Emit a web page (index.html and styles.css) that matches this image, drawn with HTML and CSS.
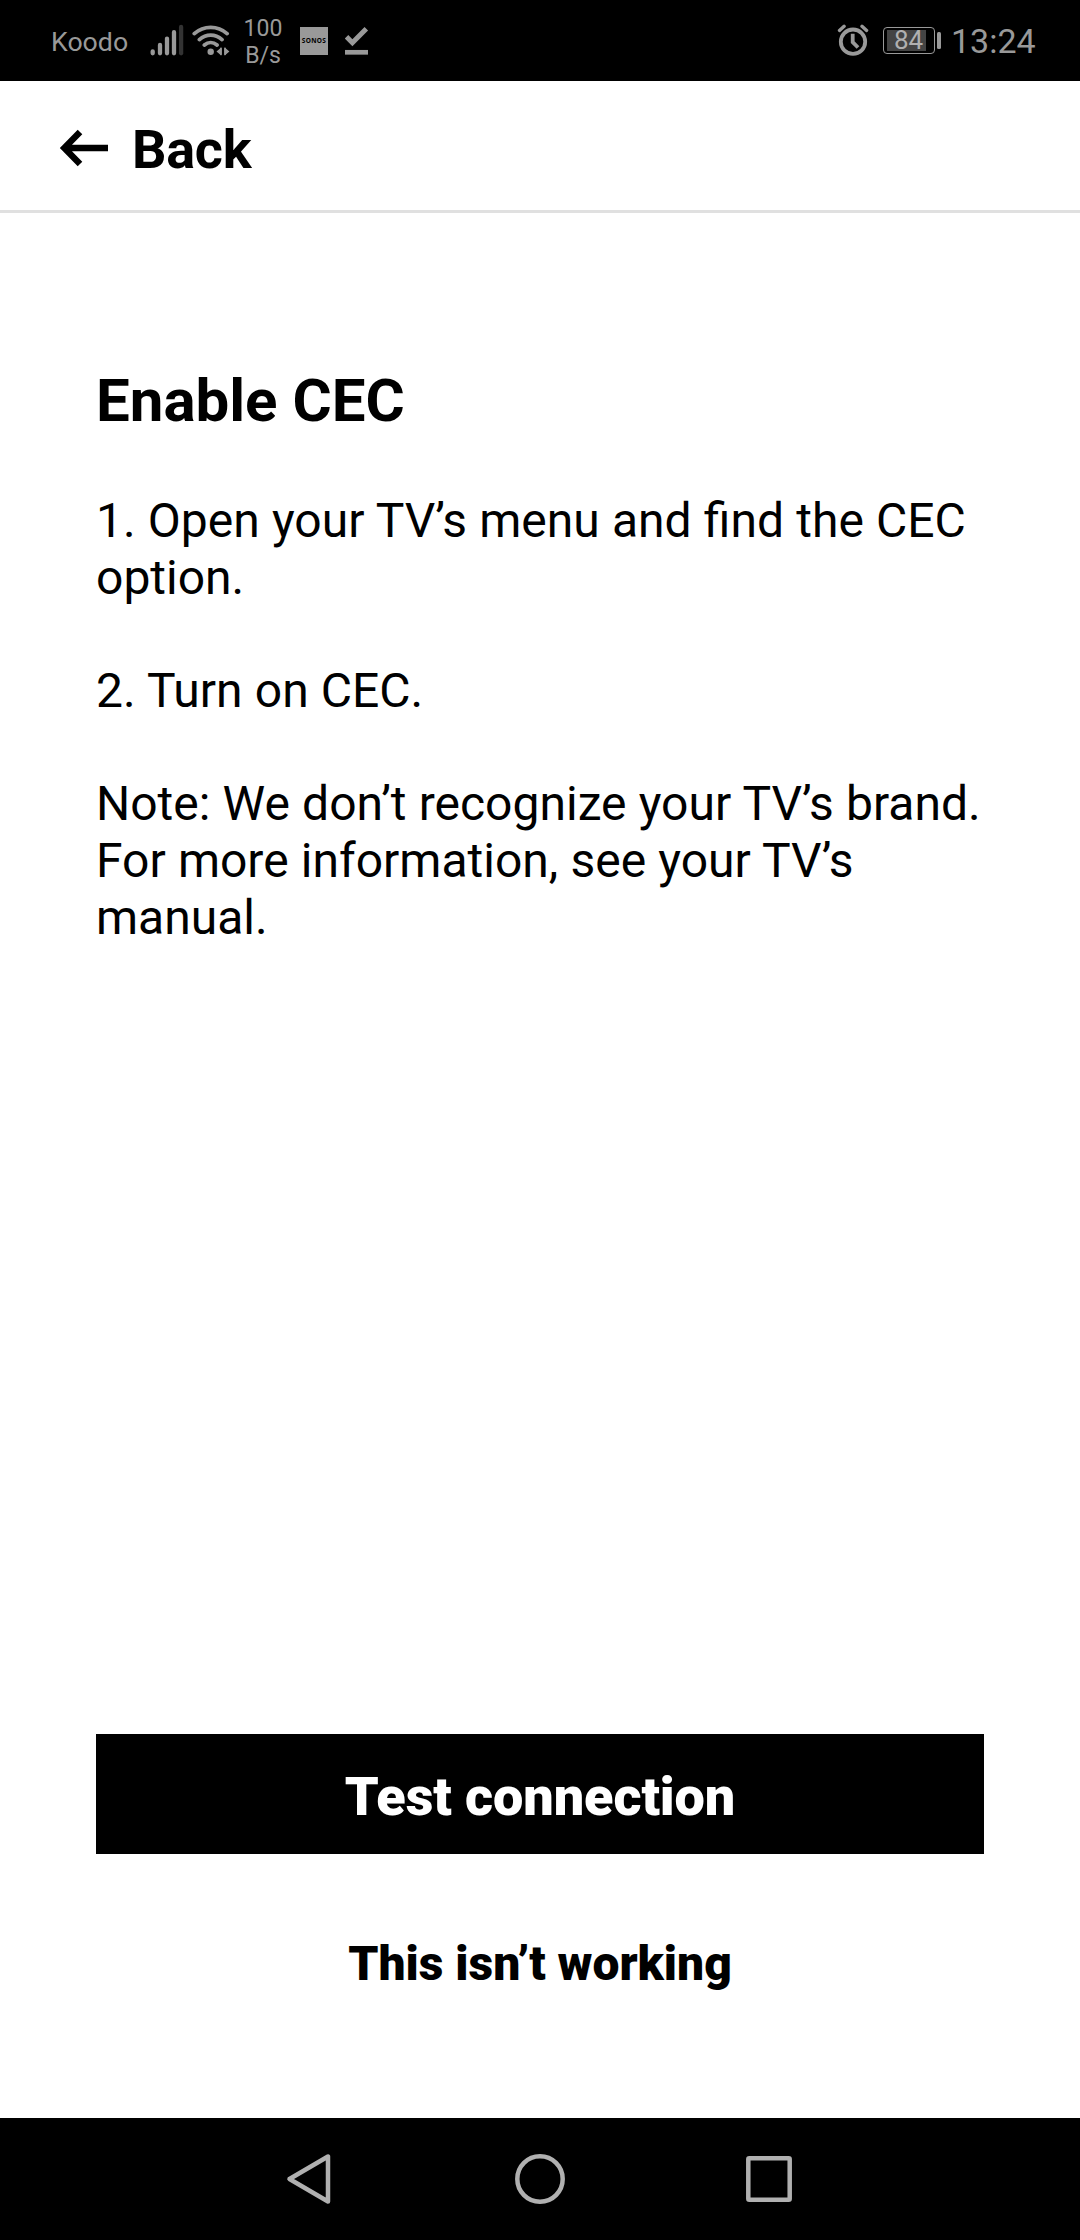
FILE: index.html
```html
<!DOCTYPE html>
<html lang="en">
<head>
<meta charset="utf-8">
<title>Enable CEC</title>
<link rel="stylesheet" href="styles.css">
</head>
<body>
<div class="screen">
  <div class="status">
    <span class="carrier">Koodo</span>
    <svg class="signal" width="36" height="34" viewBox="150 23 36 34" fill="none" stroke="#999" stroke-width="4.3" stroke-linecap="round">
      <path d="M152.7 51.3v2M160 45v8.3M167 38.6v14.7M174 32.2v21.1"/>
      <path d="M181.1 27v26.3" stroke="#333"/>
    </svg>
    <svg class="wifi" width="38" height="34" viewBox="192 23 38 34" fill="none" stroke="#999" stroke-width="3.8" stroke-linecap="round">
      <path d="M194.3 33.6c9.5-8.4 23.3-8.4 32.8 0M199.4 39.6c6.8-6 15.8-6 22.6 0M204.4 45c3.8-3.3 8.8-3.3 12.6 0"/>
      <circle cx="210.7" cy="51.7" r="3.2" fill="#999" stroke="none"/>
      <path d="M216.5 51.5l4.7-4v8zM224.7 47.5l4.7 4-4.7 4z" fill="#999" stroke="none"/>
      <path d="M221 48.3v6M225 48.3v6" stroke-width="1.8"/>
    </svg>
    <span class="rate"><span>100</span><span>B/s</span></span>
    <span class="sonos">SONOS</span>
    <svg class="done" width="24" height="30" viewBox="345 26 24 30" fill="none" stroke="#999" stroke-width="5">
      <path d="M346.5 36.8l5.9 5.9 13.9-13.9"/>
      <path d="M345 52.3h23" stroke-width="4.7"/>
    </svg>
    <svg class="alarm" width="32" height="34" viewBox="837 23 32 34" fill="none" stroke="#999" stroke-width="3.8">
      <circle cx="853" cy="41.7" r="12.2"/>
      <path d="M852.7 33.8v8.4l5.3 5.3"/>
      <path d="M839.5 30.4l4.6-4.1M862 26.3l4.6 4.1" stroke-width="3.4" stroke-linecap="round"/>
    </svg>
    <span class="battery"><span class="level">84</span></span>
    <span class="terminal"></span>
    <span class="clock">13:24</span>
  </div>

  <header class="header">
    <svg class="arrow" width="50" height="40" viewBox="59 128 50 40" fill="none" stroke="#000" stroke-width="6.4">
      <path d="M80 132L64.3 148l15.7 16M64 148h44"/>
    </svg>
    <span class="back">Back</span>
  </header>

  <main class="content">
    <h1 class="title">Enable CEC</h1>
    <p>1. Open your TV’s menu and find the CEC option.</p>
    <p>2. Turn on CEC.</p>
    <p>Note: We don’t recognize your TV’s brand. For more information, see your TV’s manual.</p>
    <div class="actions">
      <button class="primary">Test connection</button>
      <button class="secondary">This isn’t working</button>
    </div>
  </main>

  <nav class="nav">
    <svg width="50" height="54" viewBox="284 2152 50 54"><path d="M328 2156.5v45L289.5 2179z"/></svg>
    <svg width="54" height="54" viewBox="513 2152 54 54"><circle cx="540" cy="2179" r="22.7"/></svg>
    <svg width="50" height="54" viewBox="744 2152 50 54"><rect x="748.3" y="2158.3" width="41.4" height="41.4" rx="1"/></svg>
  </nav>
</div>
</body>
</html>
```
FILE: styles.css
```css
* { box-sizing: border-box; }

body {
  margin: 0;
  background: #fff;
  color: #000;
  font-family: Roboto, "Liberation Sans", sans-serif;
}

svg { display: block; flex: none; }

.screen {
  display: flex;
  flex-direction: column;
  width: 1080px;
  height: 2240px;
}

/* Status bar */
.status {
  display: flex;
  align-items: flex-start;
  height: 81px;
  padding-left: 51px;
  background: #000;
  color: #999;
  white-space: nowrap;
}

.carrier { width: 99px; padding-top: 26px; font-size: 26.7px; line-height: 32px; }
.signal { margin-top: 23px; }
.wifi { margin: 23px 0 0 6px; }

.rate {
  display: flex;
  flex-direction: column;
  align-items: center;
  width: 66px;
  padding-top: 15px;
  font-size: 23px;
  line-height: 27px;
}

.sonos {
  width: 28px;
  height: 28px;
  margin: 27px 17px 0 4px;
  background: #999;
  color: #000;
  font: 700 6.5px/28px "Open Sans", sans-serif;
  letter-spacing: 0.3px;
  text-align: center;
}

.done { margin-top: 26px; }
.alarm { margin: 23px 0 0 468px; }

.battery {
  width: 52px;
  height: 27px;
  margin: 27px 2px 0 14px;
  padding: 2px;
  border: 1px solid #999;
  border-radius: 4px;
}

.level {
  display: block;
  width: 39px;
  height: 21px;
  margin-left: 1px;
  background: #444;
  color: #b0b0b0;
  font-size: 26px;
  line-height: 20px;
  padding-left: 7px;
}

.terminal { width: 4px; height: 17px; margin-top: 32px; border-radius: 1.5px; background: #999; }
.clock { margin-left: 10px; padding-top: 21px; font-size: 34px; line-height: 40px; }

/* Header */
.header {
  display: flex;
  align-items: flex-start;
  height: 132px;
  padding: 37px 59px 0;
  border-bottom: 3px solid #e0e0e0;
}

.arrow { margin-top: 10px; }
.back { margin-left: 23px; font-size: 54px; font-weight: 700; line-height: 63px; letter-spacing: -0.25px; }

/* Instructions */
.content {
  display: flex;
  flex: 1;
  flex-direction: column;
  gap: 56px;
  padding: 152px 96px 126px;
  font-size: 48px;
  line-height: 57px;
}

.content p { margin: 0; word-spacing: 0.3px; }
.title { margin: 0; font-size: 60px; line-height: 71px; }

.actions { display: flex; flex-direction: column; gap: 81px; margin-top: auto; }

button {
  border: 0;
  color: inherit;
  font-family: inherit;
  font-weight: 900;
  text-align: center;
}

.primary { height: 120px; padding: 5px 0 0; background: #000; color: #fff; font-size: 54px; line-height: 63px; letter-spacing: -0.1px; }
.secondary { padding: 0; background: none; font-size: 48px; line-height: 57px; }

/* System navigation */
.nav {
  display: grid;
  grid-template-columns: 229px 231px 50px;
  height: 122px;
  padding: 34px 0 0 284px;
  background: #000;
}

.nav svg { fill: none; stroke: #b0b0b0; stroke-width: 4.5; stroke-linejoin: round; }
```
